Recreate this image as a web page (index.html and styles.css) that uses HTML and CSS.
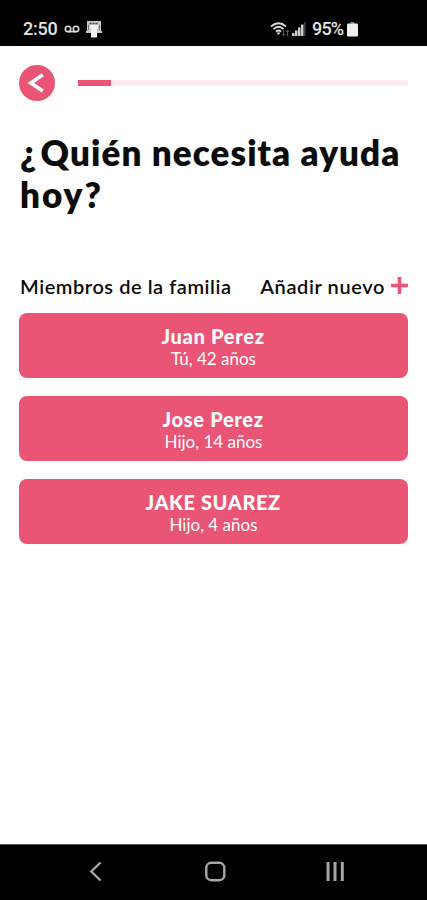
FILE: index.html
```html
<!DOCTYPE html>
<html lang="es">
<head>
<meta charset="utf-8">
<meta name="viewport" content="width=device-width, initial-scale=1">
<title>¿Quién necesita ayuda hoy?</title>
<link rel="stylesheet" href="styles.css">
</head>
<body>
<div class="screen">
  <header class="status">
    <span class="clock">2:50</span>
    <svg class="voicemail" width="16" height="8" viewBox="0 0 16 8"><g fill="none" stroke="#ddd" stroke-width="1.600"><circle cx="4" cy="4" r="2.700"/><circle cx="12" cy="4" r="2.700"/><path d="M4 6.700h8"/></g></svg>
    <svg class="cast" width="18" height="18" viewBox="0 0 18 18"><path d="M2 1h14v10h1v2H1v-2h1z" fill="#c8c8c8"/><path d="M4.500 3.500h9" stroke="#444" stroke-width="1.500" stroke-dasharray="2 1"/><path d="M3.500 5v5M14.500 5v5" stroke="#777"/><path d="M5 5h8v3.500h-1v9H6v-9H5z" fill="#f3f3f3"/></svg>
    <div class="signals">
      <svg width="20" height="15" viewBox="0 0 20 15"><g fill="none" stroke="#ddd" stroke-width="1.700"><path d="M1 4.500Q8.500-2 16 4.500M3.500 7Q8.500 2.500 13.500 7M6 9.500q2.500-2 5 0"/></g><path d="M6.500 10.500h4L8.500 13z" fill="#ddd"/><path d="M13.500 8v6m-1.500-2 1.500 2 1.500-2M17.500 14V8m-1.500 2 1.500-2 1.500 2" fill="none" stroke="#555"/></svg>
      <svg width="14" height="14" viewBox="0 0 14 14"><path d="M0 11h2.500v3H0zM3 8.500h2.500V14H3zM6 5.500h2.500V14H6zM9 2.500h2.500V14H9z" fill="#ccc"/><path d="M12 0h1.500v14H12z" fill="#444"/></svg>
      <span class="percent">95%</span>
      <svg class="battery" width="11" height="15" viewBox="0 0 11 15"><path d="M3.500 0h4v2h-4z" fill="#777"/><rect y="1.500" width="11" height="13" rx="1.200" fill="#eee"/></svg>
    </div>
  </header>
  <main class="content">
    <div class="top">
      <svg class="back" width="36" height="36" viewBox="0 0 36 36"><circle cx="18" cy="18" r="18" fill="#eb5575"/><path d="M23.800 9.800 11.800 18l12 8" fill="none" stroke="#fff" stroke-width="3.600"/></svg>
      <div class="track"><div class="bar"></div></div>
    </div>
    <h1><span class="mark">¿</span>Quién necesita ayuda<br><span class="last">hoy?</span></h1>
    <div class="row">
      <span class="members">Miembros de la familia</span>
      <span class="add"><span class="add-text">Añadir nuevo</span><svg width="17" height="17" viewBox="0 0 17 17"><path d="M8.500 0v17M0 8.500h17" stroke="#eb5575" stroke-width="3.600"/></svg></span>
    </div>
    <div class="cards">
      <div class="card"><b>Juan Perez</b><span>Tú, 42 años</span></div>
      <div class="card"><b>Jose Perez</b><span>Hijo, 14 años</span></div>
      <div class="card"><b class="caps">JAKE SUAREZ</b><span>Hijo, 4 años</span></div>
    </div>
  </main>
  <footer class="nav">
    <svg width="427" height="55" viewBox="0 0 427 55"><g fill="none" stroke="#a6a6a6" stroke-width="2.400"><path d="M100.500 17.500 91.300 26.500l9.200 9"/><rect x="206.300" y="17.800" width="18" height="17.400" rx="5"/><path d="M328 17v19M335 17v19M342.300 17v19" stroke-width="3"/></g></svg>
  </footer>
</div>
</body>
</html>
```
FILE: styles.css
```css
* { box-sizing: border-box; }
body { margin: 0; background: #fff; }
.screen { width: 427px; height: 900px; display: flex; flex-direction: column; color: #0c0c0c; font-family: "Lato", "Noto Sans", sans-serif; white-space: nowrap; }
.status { height: 46px; flex: none; background: #000; color: #e4e4e4; display: flex; align-items: center; padding: 12px 69px 0 23px; font: 500 18px/22px Roboto, sans-serif; }
.clock { width: 41px; letter-spacing: -.2px; }
.cast { margin-left: 5px; }
.signals { margin-left: auto; display: flex; align-items: center; }
.signals svg + svg { margin-left: 2px; }
.percent { margin-left: 6px; width: 35px; letter-spacing: -.8px; }
.content { flex: 1; padding: 19px 19px 0; }
.top { display: flex; align-items: center; gap: 23px; }
.track { flex: 1; height: 6px; background: #feeaf0; }
.bar { width: 33px; height: 6px; background: #eb5575; }
h1 { margin: 30px 0 0 1px; font-size: 35px; line-height: 42px; font-weight: 800; letter-spacing: 1.1px; }
.mark { margin-right: 3px; }
.last { letter-spacing: 2px; }
.row { margin-top: 57px; height: 27px; display: flex; align-items: center; justify-content: space-between; font-size: 20px; font-weight: 600; padding-left: 1px; }
.members { letter-spacing: .55px; }
.add { display: flex; align-items: center; gap: 6px; }
.add-text { letter-spacing: .6px; }
.cards { margin-top: 14px; display: flex; flex-direction: column; gap: 18px; }
.card { height: 65px; border-radius: 8px; background: #eb5575; color: #fff; display: flex; flex-direction: column; align-items: center; padding-top: 12px; font-size: 17px; line-height: 22px; }
.card b { font-size: 20px; line-height: 23px; font-weight: 900; letter-spacing: .7px; margin-right: .8px; }
.card .caps { letter-spacing: .6px; }
.nav { height: 56px; flex: none; background: #000; border-top: 1px solid #555; }
.nav svg { display: block; }
```
